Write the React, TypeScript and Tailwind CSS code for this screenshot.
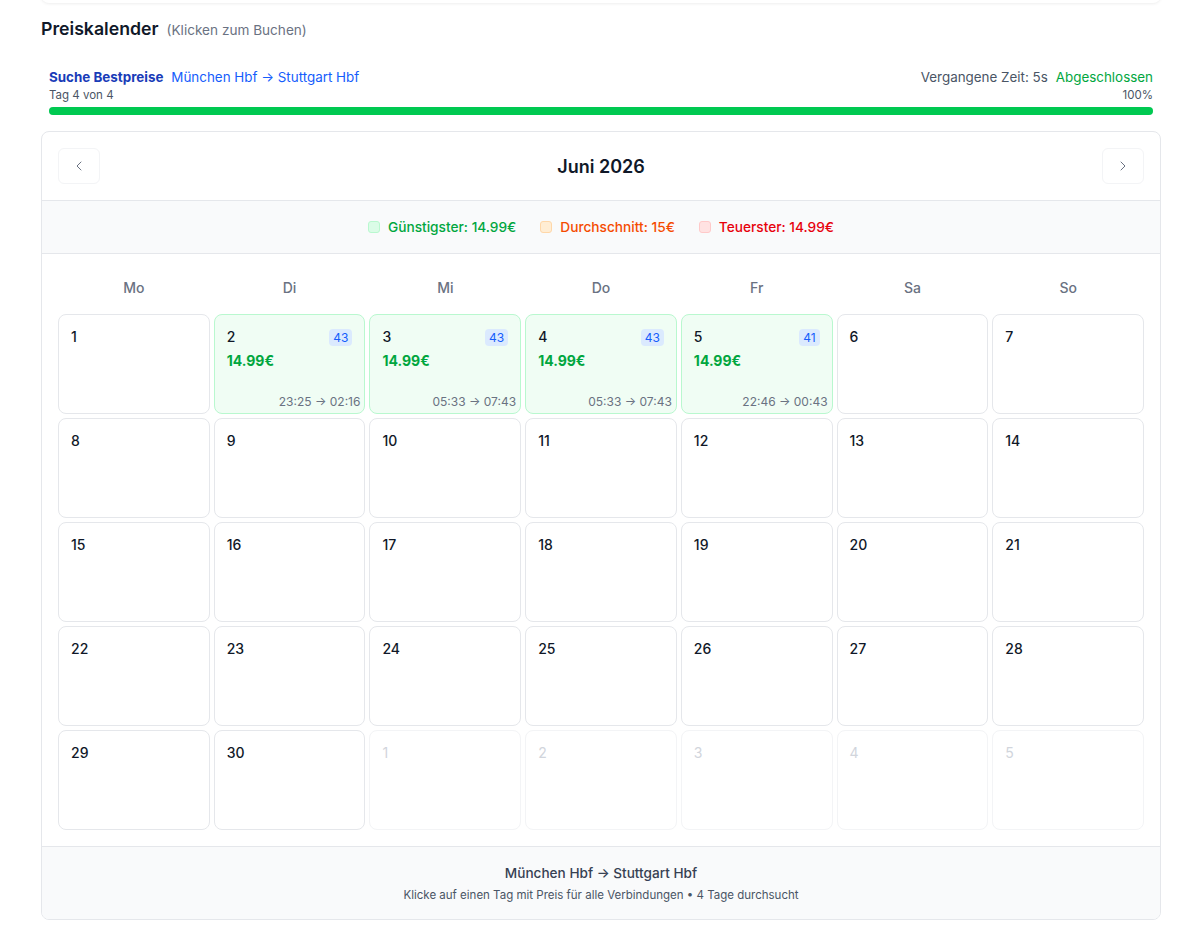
import { ChevronLeft, ChevronRight } from "lucide-react";

type DayInfo = {
  day: number;
  outside?: boolean;
  price?: string;
  count?: number;
  times?: string;
};

const priced: Record<number, { count: number; times: string }> = {
  2: { count: 43, times: "23:25 → 02:16" },
  3: { count: 43, times: "05:33 → 07:43" },
  4: { count: 43, times: "05:33 → 07:43" },
  5: { count: 41, times: "22:46 → 00:43" },
};

const weekdays = ["Mo", "Di", "Mi", "Do", "Fr", "Sa", "So"];

function buildDays(): DayInfo[] {
  const days: DayInfo[] = [];
  for (let d = 1; d <= 30; d++) {
    const p = priced[d];
    days.push(p ? { day: d, price: "14.99€", ...p } : { day: d });
  }
  for (let d = 1; d <= 5; d++) days.push({ day: d, outside: true });
  return days;
}

function DayCell({ info }: { info: DayInfo }) {
  if (info.outside) {
    return (
      <div className="relative h-[100px] rounded-lg border border-gray-100 bg-white p-3">
        <div className="text-sm text-gray-300">{info.day}</div>
      </div>
    );
  }
  if (info.price) {
    return (
      <div className="relative h-[100px] cursor-pointer rounded-lg border border-green-200 bg-green-50 p-3">
        <div className="flex items-center justify-between">
          <span className="text-sm font-medium text-gray-900">{info.day}</span>
          <span className="rounded bg-blue-100 px-1 text-xs leading-[17px] text-blue-600">
            {info.count}
          </span>
        </div>
        <div className="mt-1 text-sm font-bold text-green-600">{info.price}</div>
        <div className="absolute bottom-[3px] right-[4px] text-xs text-gray-500">
          {info.times}
        </div>
      </div>
    );
  }
  return (
    <div className="relative h-[100px] rounded-lg border border-gray-200 bg-white p-3">
      <div className="text-sm font-medium text-gray-900">{info.day}</div>
    </div>
  );
}

export default function App() {
  const days = buildDays();
  return (
    <div className="min-h-screen bg-white font-['Inter',sans-serif] text-gray-900">
      <div className="ml-[41px] w-[1120px]">
        <div className="-mt-[17px] h-5 rounded-lg bg-white shadow-[0_1px_3px_rgba(0,0,0,0.07)]" />

        <div className="mt-3 flex items-baseline gap-2">
          <h2 className="text-[17.7px] font-semibold leading-7">Preiskalender</h2>
          <span className="text-[13.6px] text-gray-500">(Klicken zum Buchen)</span>
        </div>

        <div className="mt-4 mb-2 px-2 py-2">
          <div className="flex items-center justify-between text-[13.4px] leading-5">
            <div className="flex gap-2">
              <span className="font-bold text-blue-800">Suche Bestpreise</span>
              <span className="text-blue-600">München Hbf → Stuttgart Hbf</span>
            </div>
            <div className="flex gap-2">
              <span className="text-gray-600">Vergangene Zeit: 5s</span>
              <span className="text-green-600">Abgeschlossen</span>
            </div>
          </div>
          <div className="flex justify-between text-[11.5px] leading-4 text-gray-600">
            <span>Tag 4 von 4</span>
            <span>100%</span>
          </div>
          <div className="mt-1 h-2 w-full rounded-full bg-gray-200">
            <div className="h-2 w-full rounded-full bg-green-500" />
          </div>
        </div>

        <div className="overflow-hidden rounded-lg border border-gray-200 bg-white">
          <div className="flex items-center justify-between p-4">
            <button className="flex h-9 w-[42px] items-center justify-center rounded-md border border-gray-100 text-gray-500">
              <ChevronLeft size={16} strokeWidth={1.5} />
            </button>
            <div className="pt-0.5 text-lg font-semibold">Juni 2026</div>
            <button className="flex h-9 w-[42px] items-center justify-center rounded-md border border-gray-100 text-gray-500">
              <ChevronRight size={16} strokeWidth={1.5} />
            </button>
          </div>

          <div className="flex items-center justify-center gap-6 border-y border-gray-200 bg-gray-50 py-4 text-[13.7px] font-medium leading-5">
            <div className="flex items-center gap-2 text-green-600">
              <span className="h-3 w-3 rounded-[3px] border border-green-200 bg-green-100" />
              Günstigster: 14.99€
            </div>
            <div className="flex items-center gap-2 text-orange-600">
              <span className="h-3 w-3 rounded-[3px] border border-orange-200 bg-orange-100" />
              Durchschnitt: 15€
            </div>
            <div className="flex items-center gap-2 text-red-600">
              <span className="h-3 w-3 rounded-[3px] border border-red-200 bg-red-100" />
              Teuerster: 14.99€
            </div>
          </div>

          <div className="p-4">
            <div className="mb-2 grid grid-cols-7 gap-1">
              {weekdays.map((w) => (
                <div key={w} className="py-2 text-center text-sm font-medium text-gray-500">
                  {w}
                </div>
              ))}
            </div>
            <div className="grid grid-cols-7 gap-1">
              {days.map((d, i) => (
                <DayCell key={i} info={d} />
              ))}
            </div>
          </div>

          <div className="border-t border-gray-200 bg-gray-50 py-4 text-center">
            <div className="text-[13.6px] font-medium leading-5 text-gray-700">
              München Hbf → Stuttgart Hbf
            </div>
            <div className="mt-1 text-[11.5px] leading-4 text-gray-600">
              Klicke auf einen Tag mit Preis für alle Verbindungen • 4 Tage durchsucht
            </div>
          </div>
        </div>
      </div>
    </div>
  );
}
